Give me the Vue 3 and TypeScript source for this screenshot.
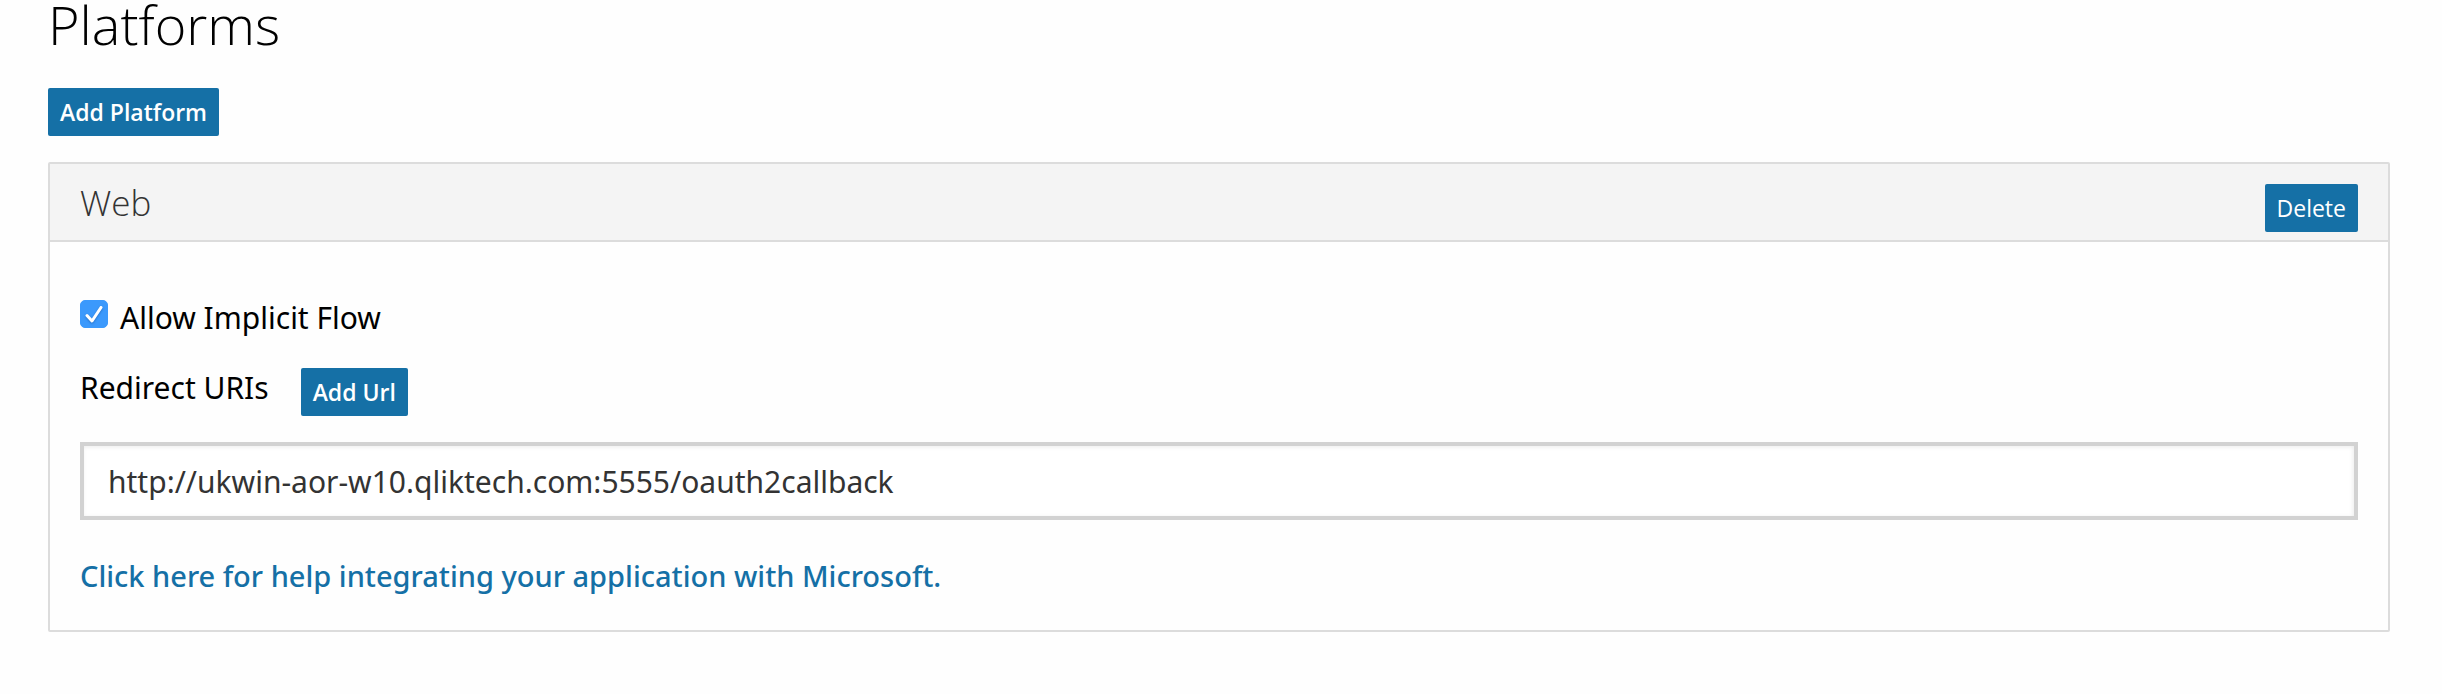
<script setup lang="ts">
import { ref } from 'vue'

const allowImplicitFlow = ref<boolean>(true)
const redirectUris = ref<string[]>(['http://ukwin-aor-w10.qliktech.com:5555/oauth2callback'])

function addUrl(): void {
  redirectUris.value.push('')
}
</script>

<template>
  <main class="page">
    <h1 class="title">Platforms</h1>
    <button type="button" class="btn btn-strong add-platform">Add Platform</button>

    <section class="panel" aria-labelledby="platform-name">
      <header class="panel-head">
        <h2 id="platform-name" class="panel-title">Web</h2>
        <button type="button" class="btn">Delete</button>
      </header>

      <div class="panel-body">
        <label class="check-row">
          <span class="check">
            <input v-model="allowImplicitFlow" type="checkbox" class="check-input" />
            <svg v-if="allowImplicitFlow" class="check-mark" viewBox="0 0 28 28" aria-hidden="true">
              <path d="M7 15.5 L12 21 L21 7.5" />
            </svg>
          </span>
          <span class="check-label">Allow Implicit Flow</span>
        </label>

        <div class="uri-row">
          <span id="redirect-label">Redirect URIs</span>
          <button type="button" class="btn btn-strong" @click="addUrl">Add Url</button>
        </div>

        <input
          v-for="(_, i) in redirectUris"
          :key="i"
          v-model="redirectUris[i]"
          type="text"
          class="uri-input"
          aria-labelledby="redirect-label"
        />

        <a class="help" href="#">Click here for help integrating your application with Microsoft.</a>
      </div>
    </section>
  </main>
</template>

<style>
body {
  margin: 0;
  background: #fefefe;
}
</style>

<style scoped>
.page {
  display: flex;
  flex-direction: column;
  padding: 0 52px 60px 48px;
  color: #000;
  font-family: "Noto Sans", "DejaVu Sans", sans-serif;
  font-size: 30px;
  line-height: 40px;
}

.title {
  margin: 0;
  font-family: "Open Sans", "Noto Sans", sans-serif;
  font-size: 54px;
  font-weight: 300;
  line-height: 48px;
}

.btn {
  box-sizing: border-box;
  height: 48px;
  padding: 0 12px;
  border: 0;
  border-radius: 2px;
  background: #1570a6;
  color: #fff;
  font-family: "Open Sans", "Noto Sans", sans-serif;
  font-size: 23px;
  line-height: 48px;
}

.btn-strong {
  font-weight: 600;
}

.add-platform {
  align-self: flex-start;
  margin-top: 40px;
}

.panel {
  margin-top: 26px;
  border: 2px solid #dcdcdc;
  border-radius: 2px;
}

.panel-head {
  display: flex;
  justify-content: space-between;
  align-items: flex-start;
  padding: 20px 30px 8px;
  border-bottom: 2px solid #dcdcdc;
  background: #f4f4f4;
}

.panel-title {
  margin: 0;
  color: #333;
  font-family: "Open Sans", "Noto Sans", sans-serif;
  font-size: 35px;
  font-weight: 300;
  line-height: 38px;
}

.panel-body {
  display: flex;
  flex-direction: column;
  align-items: flex-start;
  padding: 54px 30px 34px;
}

.check-row {
  display: flex;
  gap: 12px;
}

.check {
  display: grid;
  margin-top: 4px;
  width: 28px;
  height: 28px;
}

.check-input,
.check-mark {
  grid-area: 1 / 1;
  width: 28px;
  height: 28px;
  margin: 0;
}

.check-input {
  appearance: none;
  border: 1px solid #b4b4b4;
  border-radius: 5px;
  background: #fff;
}

.check-input:checked {
  border-color: #3b99fc;
  background: #3b99fc;
}

.check-mark {
  pointer-events: none;
  fill: none;
  stroke: #fff;
  stroke-width: 3;
  stroke-linecap: round;
  stroke-linejoin: round;
  filter: drop-shadow(0 1px 1px rgba(0, 50, 120, 0.4));
}

.check-label {
  padding-top: 2px;
}

.uri-row {
  display: flex;
  gap: 32px;
  margin-top: 30px;
}

.uri-input {
  box-sizing: border-box;
  width: 100%;
  height: 78px;
  margin-top: 26px;
  padding: 0 24px;
  border: 4px solid #d2d2d2;
  background: #fff;
  box-shadow: inset -1px 1px 4px rgba(0, 0, 0, 0.08);
  color: #333;
  font: inherit;
}

.help {
  margin-top: 36px;
  color: #1570a6;
  font-size: 29px;
  font-weight: 500;
  text-decoration: none;
}
</style>
